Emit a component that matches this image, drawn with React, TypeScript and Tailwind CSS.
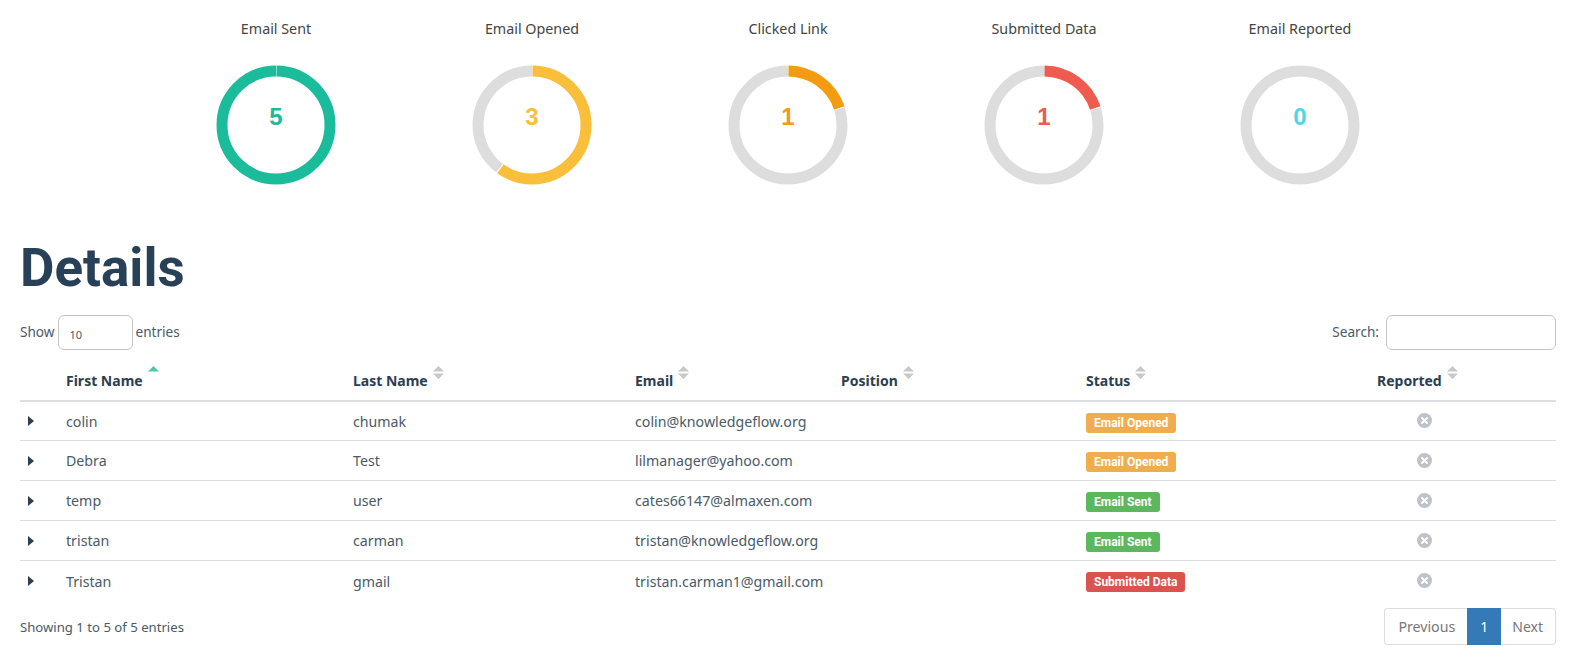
import React from "react";

const SANS = "font-['Noto_Sans',sans-serif]";

const charts = [
  { label: "Email Sent", value: 5, ring: "#1abc9c", text: "text-[#1abc9c]" },
  { label: "Email Opened", value: 3, ring: "#f9bf3b", text: "text-[#f9bf3b]" },
  { label: "Clicked Link", value: 1, ring: "#f39c12", text: "text-[#f39c12]" },
  { label: "Submitted Data", value: 1, ring: "#f05b4f", text: "text-[#f05b4f]" },
  { label: "Email Reported", value: 0, ring: "#4ad9e8", text: "text-[#4ad9e8]" },
];

const rows = [
  { first: "colin", last: "chumak", email: "colin@knowledgeflow.org", status: "Email Opened", badge: "bg-[#f0ad4e]" },
  { first: "Debra", last: "Test", email: "lilmanager@yahoo.com", status: "Email Opened", badge: "bg-[#f0ad4e]" },
  { first: "temp", last: "user", email: "cates66147@almaxen.com", status: "Email Sent", badge: "bg-[#5cb85c]" },
  { first: "tristan", last: "carman", email: "tristan@knowledgeflow.org", status: "Email Sent", badge: "bg-[#5cb85c]" },
  { first: "Tristan", last: "gmail", email: "tristan.carman1@gmail.com", status: "Submitted Data", badge: "bg-[#d9534f]" },
];

function Donut({ value, ring }: { value: number; ring: string }) {
  const r = 54;
  const c = 2 * Math.PI * r;
  const share = (value / 5) * c;
  return (
    <svg width="120" height="120" viewBox="0 0 120 120" className="block -rotate-90">
      {value < 5 && (
        <circle
          cx="60"
          cy="60"
          r={r}
          fill="none"
          stroke="#dddddd"
          strokeWidth="11"
          strokeDasharray={value === 0 ? undefined : `${c - share - 1} ${c}`}
          strokeDashoffset={value === 0 ? undefined : -(share + 0.5)}
        />
      )}
      {value > 0 && (
        <circle
          cx="60"
          cy="60"
          r={r}
          fill="none"
          stroke={ring}
          strokeWidth="11"
          strokeDasharray={`${share - 1} ${c}`}
          strokeDashoffset={-0.5}
        />
      )}
    </svg>
  );
}

function SortIcon({ active }: { active?: boolean }) {
  return (
    <svg width="11" height="13" viewBox="0 0 11 13" className="ml-[5px] mt-[4px] shrink-0">
      <path d="M0 5.5 L5.5 0 L11 5.5 Z" fill={active ? "#48c9b0" : "#c8c8c8"} />
      {!active && <path d="M0 7.5 L11 7.5 L5.5 13 Z" fill="#c8c8c8" />}
    </svg>
  );
}

function Th({ children, active }: { children: React.ReactNode; active?: boolean }) {
  return (
    <th className="p-0 pl-2 pb-[9px] text-left align-bottom font-bold text-[#2c3e50]">
      <div className="flex items-start">
        <span className="mt-[9px] leading-5">{children}</span>
        <SortIcon active={active} />
      </div>
    </th>
  );
}

export default function App() {
  return (
    <div className={`h-[661px] overflow-hidden bg-white pl-5 pr-[21px] text-[14px] text-[#4a5a68] ${SANS}`}>
      <div className="pt-[19px]">
        <div className="ml-[128px] grid w-[1280px] grid-cols-5">
          {charts.map((chart) => (
            <div key={chart.label} className="flex flex-col items-center">
              <div className="h-5 text-[14.3px] leading-5 text-[#444]">{chart.label}</div>
              <div className="relative mt-[26px]">
                <Donut value={chart.value} ring={chart.ring} />
                <div className={`absolute inset-x-0 top-[37px] text-center font-['Liberation_Sans',sans-serif] text-[24px] font-bold leading-[30px] ${chart.text}`}>
                  {chart.value}
                </div>
              </div>
            </div>
          ))}
        </div>
      </div>

      <h1 className="mt-[51px] font-['Roboto',sans-serif] text-[53px] font-bold leading-[64px] text-[#294158]">Details</h1>

      <div className="mt-[15px] flex h-[35px] items-center justify-between text-[13.6px]">
        <div className="flex items-center">
          <span>Show</span>
          <div className="mx-[3px] flex h-[35px] w-[75px] items-center rounded-[6px] border border-[#c4c4c4] pl-[11px] pt-[5px] text-[11px]">10</div>
          <span>entries</span>
        </div>
        <div className="flex items-center">
          <span>Search:</span>
          <input className="ml-[7px] h-[35px] w-[170px] rounded-[6px] border border-[#c4c4c4] bg-white" />
        </div>
      </div>

      <table className="w-full table-fixed border-collapse text-[14.2px]">
        <colgroup>
          <col className="w-[38px]" />
          <col className="w-[287px]" />
          <col className="w-[282px]" />
          <col className="w-[206px]" />
          <col className="w-[245px]" />
          <col className="w-[291px]" />
          <col />
        </colgroup>
        <thead className="text-[14px]">
          <tr className="h-[51px] border-b-2 border-[#dcdfe3]">
            <th className="p-0" />
            <Th active>First Name</Th>
            <Th>Last Name</Th>
            <Th>Email</Th>
            <Th>Position</Th>
            <Th>Status</Th>
            <Th>Reported</Th>
          </tr>
        </thead>
        <tbody>
          {rows.map((row) => (
            <tr key={row.email} className="h-10 border-b border-[#dddddd] first:h-[39px] last:border-b-0">
              <td className="p-0 pl-2 pt-[1px]">
                <svg width="6" height="10" viewBox="0 0 6 10" className="block">
                  <path d="M0 0 L6 5 L0 10 Z" fill="#2c3e50" />
                </svg>
              </td>
              <td className="p-0 pl-2 pt-[2px]">{row.first}</td>
              <td className="p-0 pl-2 pt-[2px]">{row.last}</td>
              <td className="p-0 pl-2 pt-[2px]">{row.email}</td>
              <td className="p-0 pl-2" />
              <td className="p-0 pl-2 pt-[2px]">
                <span className={`inline-block h-5 rounded-[3px] px-[8px] font-['Roboto',sans-serif] text-[12px] font-bold leading-5 text-white ${row.badge}`}>
                  {row.status}
                </span>
              </td>
              <td className="p-0 pl-[48px]">
                <svg width="15" height="15" viewBox="0 0 15 15" className="block">
                  <circle cx="7.5" cy="7.5" r="7.5" fill="#bfc3c7" />
                  <path d="M5 5 L10 10 M10 5 L5 10" stroke="#fff" strokeWidth="2" strokeLinecap="round" />
                </svg>
              </td>
            </tr>
          ))}
        </tbody>
      </table>

      <div className="mt-[8px] flex items-center justify-between">
        <span className="pt-[2px] text-[13.15px]">Showing 1 to 5 of 5 entries</span>
        <div className="flex h-[37px] items-stretch">
          <span className="flex items-center rounded-l-[4px] border border-r-0 border-[#dddddd] pl-[13px] pr-[12px] text-[14.2px] text-[#777]">Previous</span>
          <span className="flex w-[34px] items-center justify-center bg-[#337ab7] text-white">1</span>
          <span className="flex items-center rounded-r-[4px] border border-l-0 border-[#dddddd] pl-[11px] pr-[12px] text-[#777]">Next</span>
        </div>
      </div>
    </div>
  );
}
